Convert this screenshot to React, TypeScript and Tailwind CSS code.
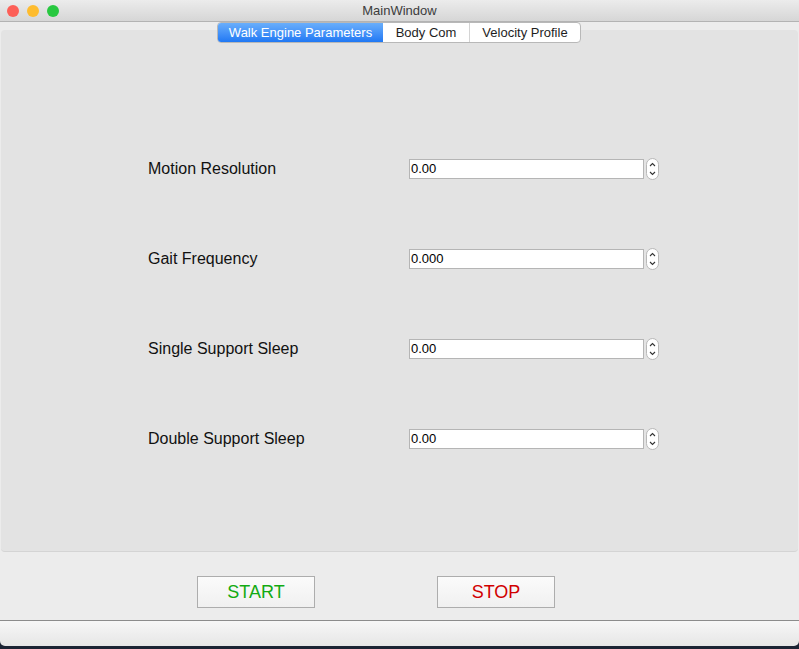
import React from "react";

const rows = [
  { label: "Motion Resolution", value: "0.00" },
  { label: "Gait Frequency", value: "0.000" },
  { label: "Single Support Sleep", value: "0.00" },
  { label: "Double Support Sleep", value: "0.00" },
];

function Stepper() {
  return (
    <div className="ml-[2px] flex h-[22px] w-[13px] flex-col items-center justify-center rounded-full border border-[#b9b9b9] bg-white">
      <svg width="7" height="16" viewBox="0 0 7 16" fill="none" stroke="#333" strokeWidth="1.1">
        <path d="M1 5 L3.5 2.5 L6 5" />
        <path d="M1 11 L3.5 13.5 L6 11" />
      </svg>
    </div>
  );
}

export default function App() {
  return (
    <div className="flex h-[649px] w-[799px] flex-col overflow-hidden bg-[#1b2333] font-['Liberation_Sans',Arial,sans-serif]">
      {/* title bar */}
      <div className="relative flex h-[22px] shrink-0 items-center justify-center border-b border-[#b3b3b3] bg-gradient-to-b from-[#ececec] to-[#d6d6d6]">
        <div className="absolute left-[7px] top-[5px] flex gap-[8px]">
          <div className="h-[12px] w-[12px] rounded-full bg-[#fd5f57]" />
          <div className="h-[12px] w-[12px] rounded-full bg-[#febc2e]" />
          <div className="h-[12px] w-[12px] rounded-full bg-[#28c840]" />
        </div>
        <span className="text-[13px] text-[#3c3c3c]">MainWindow</span>
      </div>

      {/* body */}
      <div className="flex flex-1 flex-col bg-[#ececec]">
        <div className="relative z-10 flex h-[21px] justify-center pr-[1px]">
          <div className="flex h-[21px] overflow-hidden rounded-[4px] border border-[#b8b8b8] bg-white text-[13px] text-[#1e1e1e]">
            <div className="flex w-[165px] items-center justify-center bg-gradient-to-b from-[#69aefb] to-[#1f78f4] text-white">Walk Engine Parameters</div>
            <div className="flex w-[87px] items-center justify-center border-r border-[#d4d4d4]">Body Com</div>
            <div className="flex w-[110px] items-center justify-center">Velocity Profile</div>
          </div>
        </div>
        <div className="mx-[1px] -mt-[13px] h-[522px] rounded-[4px] border-b border-[#d4d4d4] bg-[#e3e3e3] pt-[94px]">
          {rows.map((r) => (
            <div key={r.label} className="flex h-[90px] items-center pl-[147px]">
              <span className="w-[261px] text-[16px] text-[#111]">{r.label}</span>
              <div className="flex items-center">
                <div className="flex h-[20px] w-[235px] items-center border border-[#b5b5b5] bg-white pl-[1px] text-[13px] text-black">{r.value}</div>
                <Stepper />
              </div>
            </div>
          ))}
        </div>
        <div className="flex flex-1 items-start pl-[197px] pt-[24px]">
          <button className="h-[32px] w-[118px] border border-[#adadad] bg-gradient-to-b from-[#fbfbfb] to-[#f0f0f0] text-[18px] text-[#12aa12]">START</button>
          <button className="ml-[122px] h-[32px] w-[118px] border border-[#adadad] bg-gradient-to-b from-[#fbfbfb] to-[#f0f0f0] text-[18px] text-[#d10000]">STOP</button>
        </div>
      </div>

      {/* status bar */}
      <div className="h-[26px] shrink-0 rounded-b-[5px] border-t border-[#8c8c8c] bg-gradient-to-b from-[#f7f7f7] to-[#e6e6e6]" />
      <div className="h-[3px] shrink-0" />
    </div>
  );
}
